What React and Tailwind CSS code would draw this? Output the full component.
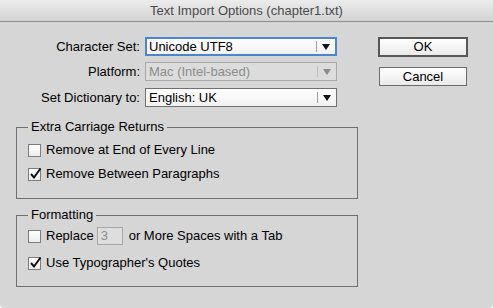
import React from "react";

const Arrow = ({ disabled }) => (
  <svg width="8" height="6" viewBox="0 0 8 6" className="shrink-0">
    <path d="M0 0 H8 L4 6 Z" fill={disabled ? "#8a8a8a" : "#111"} />
  </svg>
);

const Select = ({ value, focused, disabled }) => (
  <div
    className={`w-[192px] h-[19px] flex items-center bg-gradient-to-b from-white to-[#f1f1f1] ${
      focused
        ? "border-2 border-[#4a86d0] pl-[2px]"
        : disabled
          ? "border border-[#a9a9a9] pl-[3px] bg-none bg-[#dcdcdc]"
          : "border border-[#6f6f6f] pl-[3px]"
    }`}
  >
    <span
      className={`flex-1 leading-[15px] ${disabled ? "text-[#8c8c8c]" : "text-black"}`}
    >
      {value}
    </span>
    <div
      className={`w-px h-[11px] ${disabled ? "bg-[#bdbdbd]" : "bg-[#a0a0a0]"}`}
    />
    <div className="w-[18px] flex justify-center">
      <Arrow disabled={disabled} />
    </div>
  </div>
);

const Checkbox = ({ checked }) => (
  <div className="w-[13px] h-[13px] border border-[#7d7d7d] bg-gradient-to-b from-white to-[#ececec] relative shrink-0">
    {checked && (
      <svg
        width="13"
        height="13"
        viewBox="0 0 13 13"
        className="absolute left-[0px] top-[-2px]"
      >
        <path
          d="M2 7 L5 10.5 L11.5 1.5"
          fill="none"
          stroke="#111"
          strokeWidth="2"
        />
      </svg>
    )}
  </div>
);

const Group = ({ title, children, className }) => (
  <fieldset
    className={`w-[342px] border border-[#707070] px-[11px] m-0 ${className}`}
  >
    <legend className="px-[3px] leading-[16px] text-black">{title}</legend>
    {children}
  </fieldset>
);

export default function App() {
  return (
    <div
      className="w-[493px] h-[308px] bg-[#d6d6d6] text-[13px] text-black overflow-hidden rounded-b-[4px]"
      style={{ fontFamily: '"Liberation Sans", Arial, sans-serif' }}
    >
      {/* Title bar */}
      <div className="h-[22px] border-b border-[#8e8e8e] bg-gradient-to-b from-[#ececec] to-[#d3d3d3] flex items-center justify-center">
        <span className="text-[#4a4a4a] leading-[16px]">
          Text Import Options (chapter1.txt)
        </span>
      </div>

      <div className="flex">
        {/* Left side */}
        <div className="pl-[16px]">
          <div className="pt-[15px] flex flex-col">
            <div className="flex items-center h-[19px]">
              <span className="w-[129px] text-right pr-[5px]">Character Set:</span>
              <Select value="Unicode UTF8" focused />
            </div>
            <div className="flex items-center h-[19px] mt-[6px]">
              <span className="w-[129px] text-right pr-[5px]">Platform:</span>
              <Select value="Mac (Intel-based)" disabled />
            </div>
            <div className="flex items-center h-[19px] mt-[7px]">
              <span className="w-[129px] text-right pr-[5px]">Set Dictionary to:</span>
              <Select value="English: UK" />
            </div>
          </div>

          <Group title="Extra Carriage Returns" className="mt-[12px] h-[80px]">
            <div className="flex items-center gap-[5px] h-[16px] mt-[7px]">
              <Checkbox />
              <span>Remove at End of Every Line</span>
            </div>
            <div className="flex items-center gap-[5px] h-[16px] mt-[8px]">
              <Checkbox checked />
              <span>Remove Between Paragraphs</span>
            </div>
          </Group>

          <Group title="Formatting" className="mt-[8px] h-[80px]">
            <div className="flex items-center h-[18px] mt-[4px]">
              <Checkbox />
              <span className="ml-[5px]">Replace</span>
              <div className="ml-[3px] w-[26px] h-[18px] border border-[#a8a8a8] bg-[#dedede] text-[#8c8c8c] pl-[3px] leading-[16px]">
                3
              </div>
              <span className="ml-[6px]">or More Spaces with a Tab</span>
            </div>
            <div className="flex items-center gap-[5px] h-[16px] mt-[10px]">
              <Checkbox checked />
              <span>Use Typographer's Quotes</span>
            </div>
          </Group>
        </div>

        {/* Buttons */}
        <div className="ml-[20px] pt-[15px] flex flex-col items-start">
          <button className="w-[90px] h-[20px] border-2 border-[#575757] bg-gradient-to-b from-white to-[#eaeaea] leading-[14px] text-black">
            OK
          </button>
          <button className="ml-[1px] mt-[10px] w-[88px] h-[19px] border border-[#6a6a6a] bg-gradient-to-b from-white to-[#eaeaea] leading-[15px] text-black">
            Cancel
          </button>
        </div>
      </div>
    </div>
  );
}
